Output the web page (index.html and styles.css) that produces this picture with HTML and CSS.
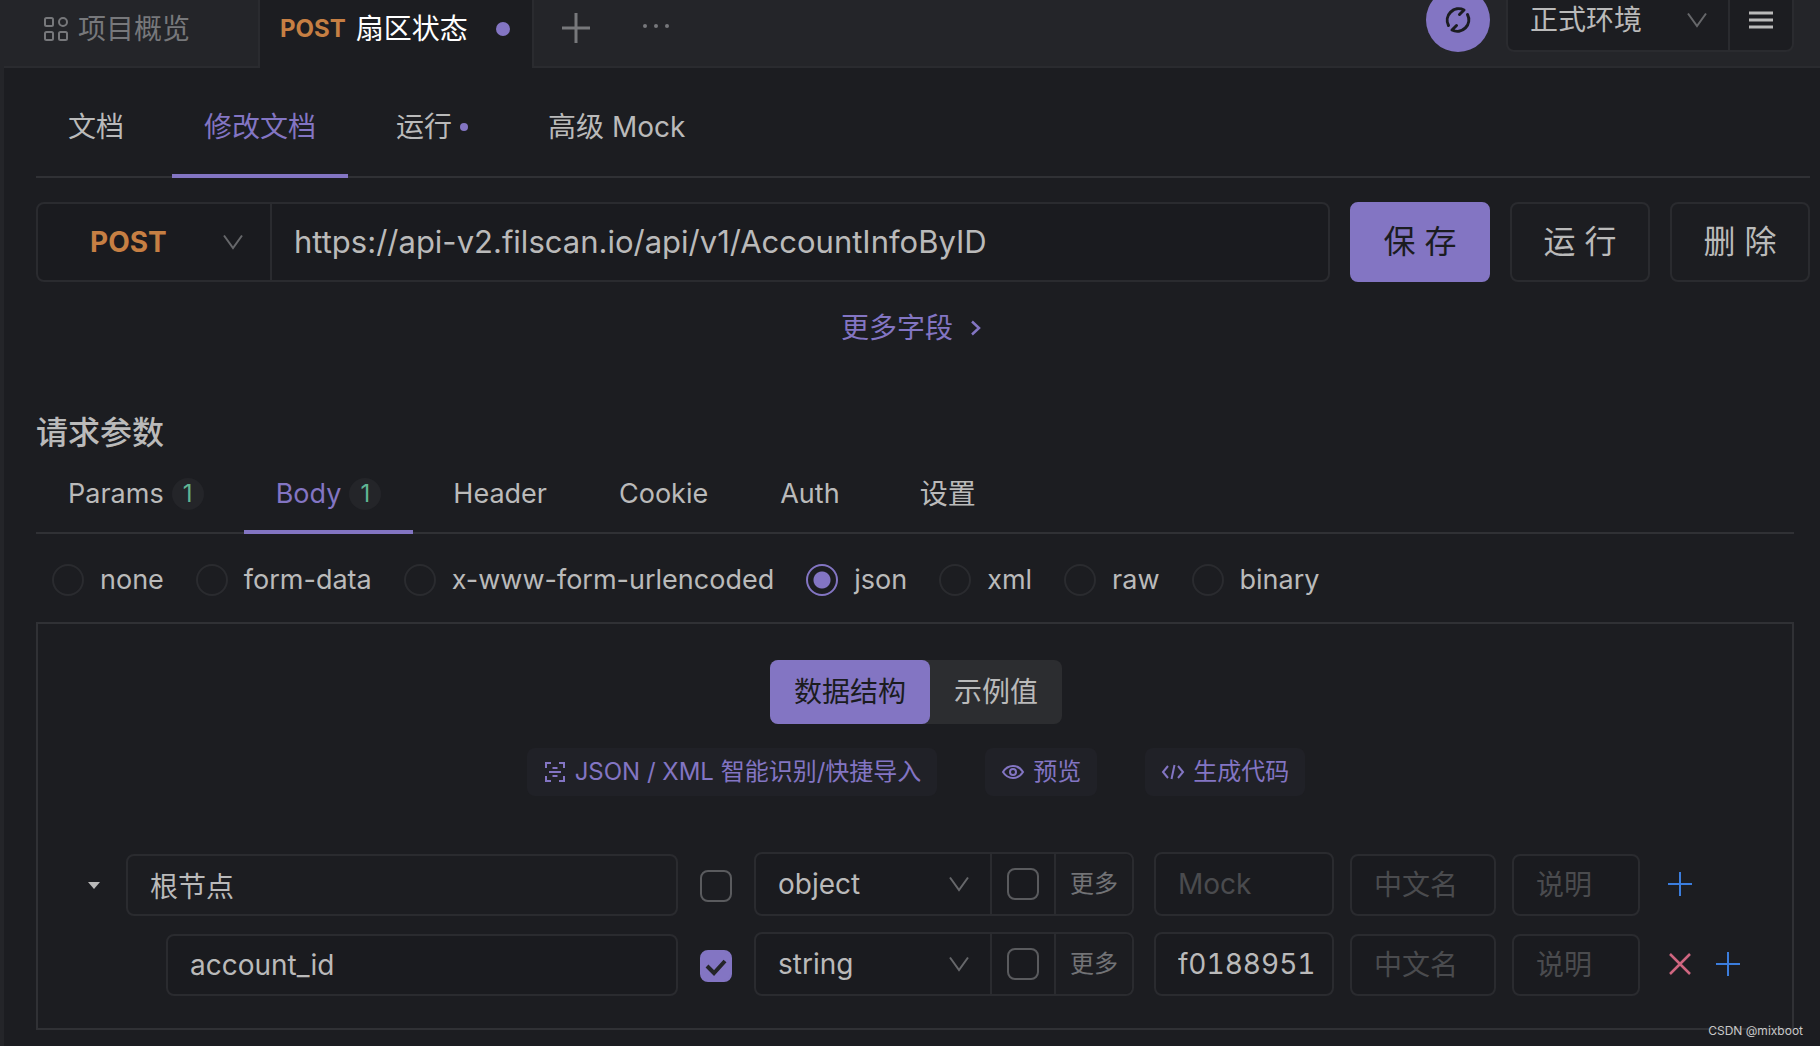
FILE: index.html
```html
<!DOCTYPE html>
<html lang="zh-CN">
<head>
<meta charset="utf-8">
<title>扇区状态</title>
<link rel="stylesheet" href="styles.css">
</head>
<body>
<svg class="defs" width="0" height="0" aria-hidden="true">
  <symbol id="chevron" viewBox="0 0 22 16"><path d="M2 1.500 11 14 20 1.500" fill="none" stroke="currentColor" stroke-width="2"/></symbol>
  <symbol id="plus" viewBox="0 0 24 24"><path d="M12 0v24M0 12h24" fill="none" stroke="currentColor" stroke-width="2"/></symbol>
</svg>
<div class="app">
  <header class="topbar">
    <nav class="page-tabs">
      <a class="page-tab" href="#overview">
        <svg width="24" height="24" viewBox="0 0 24 24" fill="none" stroke="currentColor" stroke-width="2"><rect x="1" y="1" width="8" height="8" rx="1.500"/><circle cx="19" cy="5" r="4"/><rect x="1" y="15" width="8" height="8" rx="1.500"/><rect x="15" y="15" width="8" height="8" rx="1.500"/></svg>
        <span>项目概览</span>
      </a>
      <a class="page-tab page-tab-active" href="#sector"><b class="method">POST</b><span>扇区状态</span><i class="unsaved"></i></a>
    </nav>
    <button class="icon-button add-tab" type="button" aria-label="新建"><svg width="30" height="30" viewBox="0 0 30 30"><path d="M15 0v30M1 15h28" stroke="currentColor" stroke-width="3"/></svg></button>
    <button class="icon-button more-tabs" type="button" aria-label="更多标签"><svg width="30" height="6" viewBox="0 0 30 6" fill="currentColor"><circle cx="4" cy="3" r="2"/><circle cx="15" cy="3" r="2"/><circle cx="26" cy="3" r="2"/></svg></button>
    <div class="tools">
      <button class="sync" type="button" aria-label="同步"><svg width="28" height="28" viewBox="0 0 28 28" fill="none" stroke="currentColor" stroke-width="3" stroke-linecap="round" stroke-linejoin="round"><path d="M4.500 19.500A11.500 11.500 0 0 1 20 4l-4.500 4.500"/><path d="M23.500 8.500A11.500 11.500 0 0 1 8 24l4.500-4.500"/></svg></button>
      <div class="environment">
        <div class="select env-select"><select aria-label="环境"><option>正式环境</option></select><svg width="22" height="16"><use href="#chevron"/></svg></div>
        <button class="env-menu" type="button" aria-label="环境管理"><svg width="24" height="18" viewBox="0 0 24 18"><path d="M0 2h24M0 9h24M0 16h24" stroke="currentColor" stroke-width="3"/></svg></button>
      </div>
    </div>
  </header>
  <main>
    <nav class="tabs main-tabs">
      <a href="#doc">文档</a><a class="active" href="#edit">修改文档</a><a href="#run">运行<i class="dot"></i></a><a href="#mock">高级 Mock</a>
    </nav>
    <form class="url-row">
      <div class="url-group">
        <div class="select method-select"><select class="method" aria-label="请求方法"><option>POST</option></select><svg width="22" height="16"><use href="#chevron"/></svg></div>
        <input class="url" type="text" aria-label="请求地址" value="https://api-v2.filscan.io/api/v1/AccountInfoByID">
      </div>
      <button class="button primary" type="button">保 存</button>
      <button class="button" type="button">运 行</button>
      <button class="button" type="button">删 除</button>
    </form>
    <a class="more-fields" href="#fields">更多字段<svg width="10" height="16" viewBox="0 0 10 16"><path d="m1 1.500 7 6.500-7 6.500" fill="none" stroke="currentColor" stroke-width="2.500"/></svg></a>
    <section class="request">
      <h2>请求参数</h2>
      <nav class="tabs param-tabs">
        <a href="#params">Params<span class="badge">1</span></a><a class="active" href="#body">Body<span class="badge">1</span></a><a href="#header">Header</a><a href="#cookie">Cookie</a><a href="#auth">Auth</a><a class="zh" href="#settings">设置</a>
      </nav>
      <div class="body-types">
        <label><input type="radio" name="type">none</label>
        <label><input type="radio" name="type">form-data</label>
        <label><input type="radio" name="type">x-www-form-urlencoded</label>
        <label><input type="radio" name="type" checked>json</label>
        <label><input type="radio" name="type">xml</label>
        <label><input type="radio" name="type">raw</label>
        <label><input type="radio" name="type">binary</label>
      </div>
      <div class="schema">
        <div class="segmented"><button class="selected" type="button">数据结构</button><button type="button">示例值</button></div>
        <div class="actions">
          <button type="button"><svg width="24" height="24" viewBox="0 0 24 24" fill="none" stroke="currentColor" stroke-width="2"><path d="M3 8V3h5M16 3h5v5M21 16v5h-5M8 21H3v-5M9.500 8h5M6 12h12M9.500 16h5"/></svg>JSON / XML 智能识别/快捷导入</button>
          <button type="button"><svg width="24" height="24" viewBox="0 0 24 24" fill="none" stroke="currentColor" stroke-width="2"><path d="M2 12c5-8 15-8 20 0-5 8-15 8-20 0Z"/><circle cx="12" cy="12" r="3"/></svg>预览</button>
          <button type="button"><svg width="24" height="24" viewBox="0 0 24 24" fill="none" stroke="currentColor" stroke-width="2"><path d="m7 6-5 6 5 6M17 6l5 6-5 6M13.500 5l-3 14"/></svg>生成代码</button>
        </div>
        <div class="fields">
          <div class="field">
            <div class="name">
              <button class="caret" type="button" aria-label="折叠"><svg width="12" height="7" viewBox="0 0 12 7"><path d="M0 0h12L6 7z" fill="currentColor"/></svg></button>
              <input class="box" type="text" aria-label="字段名" value="根节点" readonly>
            </div>
            <input type="checkbox" aria-label="必填">
            <div class="type">
              <div class="select"><select aria-label="类型"><option>object</option></select><svg width="22" height="16"><use href="#chevron"/></svg></div>
              <span class="check-cell"><input type="checkbox" aria-label="允许为空"></span>
              <button type="button">更多</button>
            </div>
            <input class="box mock" type="text" aria-label="Mock" placeholder="Mock">
            <input class="box" type="text" aria-label="中文名" placeholder="中文名">
            <input class="box" type="text" aria-label="说明" placeholder="说明">
            <div class="row-tools"><button class="icon-button add" type="button" aria-label="添加"><svg width="24" height="24"><use href="#plus"/></svg></button></div>
          </div>
          <div class="field">
            <div class="name child">
              <input class="box" type="text" aria-label="字段名" value="account_id">
            </div>
            <input type="checkbox" aria-label="必填" checked>
            <div class="type">
              <div class="select"><select aria-label="类型"><option>string</option></select><svg width="22" height="16"><use href="#chevron"/></svg></div>
              <span class="check-cell"><input type="checkbox" aria-label="允许为空"></span>
              <button type="button">更多</button>
            </div>
            <input class="box mock" type="text" aria-label="Mock" value="f0188951">
            <input class="box" type="text" aria-label="中文名" placeholder="中文名">
            <input class="box" type="text" aria-label="说明" placeholder="说明">
            <div class="row-tools">
              <button class="icon-button remove" type="button" aria-label="删除"><svg width="24" height="24" viewBox="0 0 24 24"><path d="m2 2 20 20M22 2 2 22" stroke="currentColor" stroke-width="2.500"/></svg></button>
              <button class="icon-button add" type="button" aria-label="添加"><svg width="24" height="24"><use href="#plus"/></svg></button>
            </div>
          </div>
        </div>
      </div>
    </section>
  </main>
  <span class="watermark">CSDN @mixboot</span>
</div>
</body>
</html>
```
FILE: styles.css
```css
:root {
  --bg: #1c1d21;
  --bar: #242529;
  --field: #1a1b1f;
  --line: #2a2b2f;
  --rule: #303135;
  --text: #bababa;
  --muted: #727376;
  --faint: #4a4b4e;
  --purple: #8375c3;
  --orange: #c67f43;
  --blue: #3b7ddd;
  --red: #cf6680;
}

* { box-sizing: border-box; }

body {
  margin: 0;
  background: var(--bg);
  color: var(--text);
  font: 28px/40px Inter, "Noto Sans CJK SC", sans-serif;
}

button, input, select { font: inherit; color: inherit; margin: 0; }
button { padding: 0; border: 0; background: none; cursor: pointer; white-space: nowrap; }
a { color: inherit; text-decoration: none; white-space: nowrap; }
svg { display: block; flex: none; }
input[type="text"] { min-width: 0; outline: 0; }
::placeholder { color: var(--faint); opacity: 1; }

.defs { position: absolute; }
.app { position: relative; min-height: 100vh; border-left: 4px solid var(--bar); overflow: hidden; }

.topbar { display: flex; height: 68px; background: var(--bar); color: #77787b; }
.page-tabs { display: flex; }
.page-tab {
  display: flex;
  align-items: center;
  gap: 10px;
  width: 256px;
  padding: 0 40px 8px;
  border-right: 2px solid var(--line);
  border-bottom: 2px solid var(--line);
}
.page-tab-active {
  width: 274px;
  padding: 0 20px 10px;
  border-bottom: 0;
  background: var(--bg);
  color: #fff;
}
.method { color: var(--orange); font-weight: 700; }
.page-tab .method { font-size: 24px; }
.unsaved { width: 14px; height: 14px; margin-left: 18px; border-radius: 50%; background: var(--purple); }
.icon-button { display: flex; align-items: center; justify-content: center; }
.topbar .icon-button { padding: 0 0 10px; border-bottom: 2px solid var(--line); }
.add-tab { width: 84px; }
.topbar .more-tabs { width: 76px; padding-bottom: 14px; }
.tools {
  display: flex;
  flex: 1;
  align-items: flex-end;
  justify-content: flex-end;
  gap: 16px;
  padding: 0 26px 14px 0;
  border-bottom: 2px solid var(--line);
}
.sync {
  display: grid;
  place-items: center;
  width: 64px;
  height: 64px;
  border-radius: 50%;
  background: var(--purple);
  color: #1b1c20;
}
.environment {
  display: flex;
  width: 288px;
  height: 64px;
  border: 2px solid var(--line);
  border-radius: 8px;
  background: var(--bg);
  color: var(--text);
}
.env-menu { display: grid; place-items: center; width: 64px; border-left: 2px solid var(--line); }

.select { position: relative; display: flex; flex: 1; min-width: 0; }
.select select {
  width: 100%;
  padding: 0 22px;
  border: 0;
  outline: 0;
  background: transparent;
  appearance: none;
}
.select svg { position: absolute; right: 20px; top: calc(50% - 8px); color: #66676a; pointer-events: none; }

main { padding: 0 10px 16px 32px; }

.tabs { display: flex; border-bottom: 2px solid var(--rule); }
.tabs a {
  display: flex;
  align-items: center;
  gap: 8px;
  padding: 0 32px;
  margin-bottom: -2px;
  border-bottom: 4px solid transparent;
}
.tabs .active { border-color: var(--purple); color: var(--purple); }
.main-tabs { height: 110px; gap: 16px; }
.main-tabs a { padding-top: 12px; }
.dot { width: 8px; height: 8px; border-radius: 50%; background: var(--purple); }

.url-row { display: flex; gap: 20px; margin-top: 24px; height: 80px; font-size: 32px; }
.url-group {
  display: flex;
  flex: 1;
  border: 2px solid var(--line);
  border-radius: 8px;
  background: var(--field);
}
.method-select { flex: 0 0 232px; font-size: 28px; }
.method-select select { padding-left: 52px; }
.method-select svg { right: 26px; }
.url { flex: 1; padding: 0 22px; border: 0; border-left: 2px solid var(--line); background: none; font-size: 31px; }
.button { width: 140px; border: 2px solid var(--line); border-radius: 8px; }
.primary { border-color: var(--purple); background: var(--purple); color: #1b1c20; }

.more-fields {
  display: flex;
  align-items: center;
  justify-content: center;
  gap: 18px;
  margin-top: 26px;
  padding-right: 24px;
  color: var(--purple);
}

.request { margin: 64px 16px 0 0; }
h2 { margin: 0; font-size: 32px; font-weight: 500; line-height: 42px; }
.param-tabs { height: 80px; gap: 8px; font-size: 27px; }
.param-tabs a { padding-top: 4px; }
.param-tabs .zh { padding-left: 40px; font-size: 28px; }
.badge {
  width: 32px;
  height: 32px;
  border-radius: 50%;
  background: var(--bar);
  color: #60b594;
  font-size: 24px;
  line-height: 32px;
  text-align: center;
}

.body-types { display: flex; gap: 32px; padding: 26px 16px 22px; font-size: 27px; }
.body-types label { display: flex; align-items: center; gap: 16px; white-space: nowrap; }
input[type="radio"] {
  width: 32px;
  height: 32px;
  border: 2px solid var(--line);
  border-radius: 50%;
  appearance: none;
}
input[type="radio"]:checked {
  border-color: var(--purple);
  background: radial-gradient(circle, var(--purple) 8px, transparent 9px);
}

.schema {
  display: flex;
  flex-direction: column;
  align-items: center;
  padding: 36px 16px 32px 18px;
  border: 2px solid var(--rule);
}
.segmented { display: flex; height: 64px; border-radius: 8px; background: #2c2d30; }
.segmented button { padding: 0 24px; border-radius: 8px; }
.segmented .selected { background: var(--purple); color: #1b1c20; }
.actions { display: flex; gap: 48px; margin-top: 24px; }
.actions button {
  display: flex;
  align-items: center;
  gap: 8px;
  height: 48px;
  padding: 0 16px;
  border-radius: 8px;
  background: #202127;
  color: var(--purple);
  font-size: 24px;
}

.fields { display: grid; gap: 16px; width: 100%; margin-top: 56px; }
.field {
  display: grid;
  grid-template-columns: minmax(0, 1fr) 38px 380px 184px 146px 128px 120px;
  column-gap: 16px;
  align-items: end;
}
.field > input[type="checkbox"] { margin: 0 0 14px; }
.field .mock {
  width: 180px;
  height: 64px;
  padding-right: 8px;
  justify-self: end;
  font-variant-numeric: tabular-nums;
}
.name { display: flex; align-items: center; padding-right: 6px; }
.name .box { flex: 1; }
.child { padding-left: 110px; }
.caret { display: flex; justify-content: center; width: 70px; padding-left: 6px; }
.box {
  width: 100%;
  height: 62px;
  padding: 0 22px;
  border: 2px solid var(--line);
  border-radius: 8px;
  background: var(--field);
}
input[readonly] { background: transparent; }
.type {
  display: flex;
  height: 64px;
  border: 2px solid var(--line);
  border-radius: 8px;
  background: var(--field);
}
.check-cell { display: grid; place-items: center; width: 66px; border: solid var(--line); border-width: 0 2px; }
.type button { width: 76px; background: var(--bg); color: var(--muted); font-size: 24px; border-radius: 0 8px 8px 0; }
input[type="checkbox"] {
  width: 32px;
  height: 32px;
  border: 2px solid #5a5b5e;
  border-radius: 8px;
  appearance: none;
}
input[type="checkbox"]:checked {
  border-color: var(--purple);
  background: var(--purple) url('data:image/svg+xml,<svg xmlns="http://www.w3.org/2000/svg" viewBox="0 0 28 28"><path d="m5 14 7 7L23 9" fill="none" stroke="%23242529" stroke-width="4"/></svg>') center / 28px;
}
.row-tools { display: flex; align-items: center; gap: 24px; height: 64px; padding-left: 12px; }
.add { color: var(--blue); }
.remove { color: var(--red); }

.watermark { position: absolute; right: 17px; bottom: 7px; color: #c8c8c8; font-size: 12px; line-height: 16px; }
```
